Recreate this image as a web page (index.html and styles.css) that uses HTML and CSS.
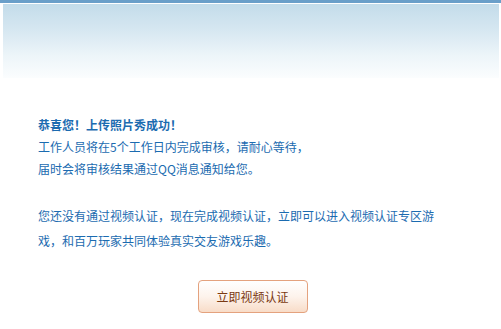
FILE: index.html
```html
<!DOCTYPE html>
<html lang="zh-CN">
<head>
<meta charset="utf-8">
<link rel="stylesheet" href="styles.css">
</head>
<body>
<div class="page">
  <div class="topbar"></div>
  <div class="banner"></div>
  <div class="content">
    <p class="msg">
      <span class="title">恭喜您！上传照片秀成功！</span><br>
      工作人员将在5个工作日内完成审核，请耐心等待，<br>
      届时会将审核结果通过QQ消息通知给您。
    </p>
    <p class="msg msg2">
      您还没有通过视频认证，现在完成视频认证，立即可以进入视频认证专区游<br>
      戏，和百万玩家共同体验真实交友游戏乐趣。
    </p>
    <div class="actions">
      <button class="btn">立即视频认证</button>
    </div>
  </div>
</div>
</body>
</html>
```
FILE: styles.css
```css
html, body {
  margin: 0;
  padding: 0;
  background: #ffffff;
}
.page {
  width: 501px;
  height: 329px;
  overflow: hidden;
  font-family: "Noto Sans CJK SC", "DejaVu Sans", sans-serif;
}
.topbar {
  height: 3px;
  background: #6a9fc9;
  border-bottom: 1px solid #ffffff;
}
.banner {
  height: 74px;
  margin: 0 2px 0 3px;
  background: linear-gradient(to bottom, #c3dcea 0%, #d6e7f1 35%, #edf5f9 70%, #fbfdfe 100%);
}
.content {
  padding: 36px 0 0 38px;
}
.msg {
  margin: 0;
  font-size: 12px;
  line-height: 22px;
  color: #1b6bb0;
}
.title {
  font-weight: bold;
}
.msg2 {
  margin-top: 23px;
  line-height: 25px;
}
.actions {
  display: flex;
  justify-content: center;
  padding-top: 27px;
  padding-right: 38px;
}
.btn {
  width: 110px;
  height: 33px;
  border: 1px solid #e4a27e;
  border-radius: 4px;
  background: linear-gradient(to bottom, #ffffff 0%, #fdf3ec 50%, #f8dcc8 100%);
  color: #7b3a12;
  font-family: "Noto Sans CJK SC", "DejaVu Sans", sans-serif;
  font-size: 12px;
  padding: 0;
  margin-left: 4px;
}
```
